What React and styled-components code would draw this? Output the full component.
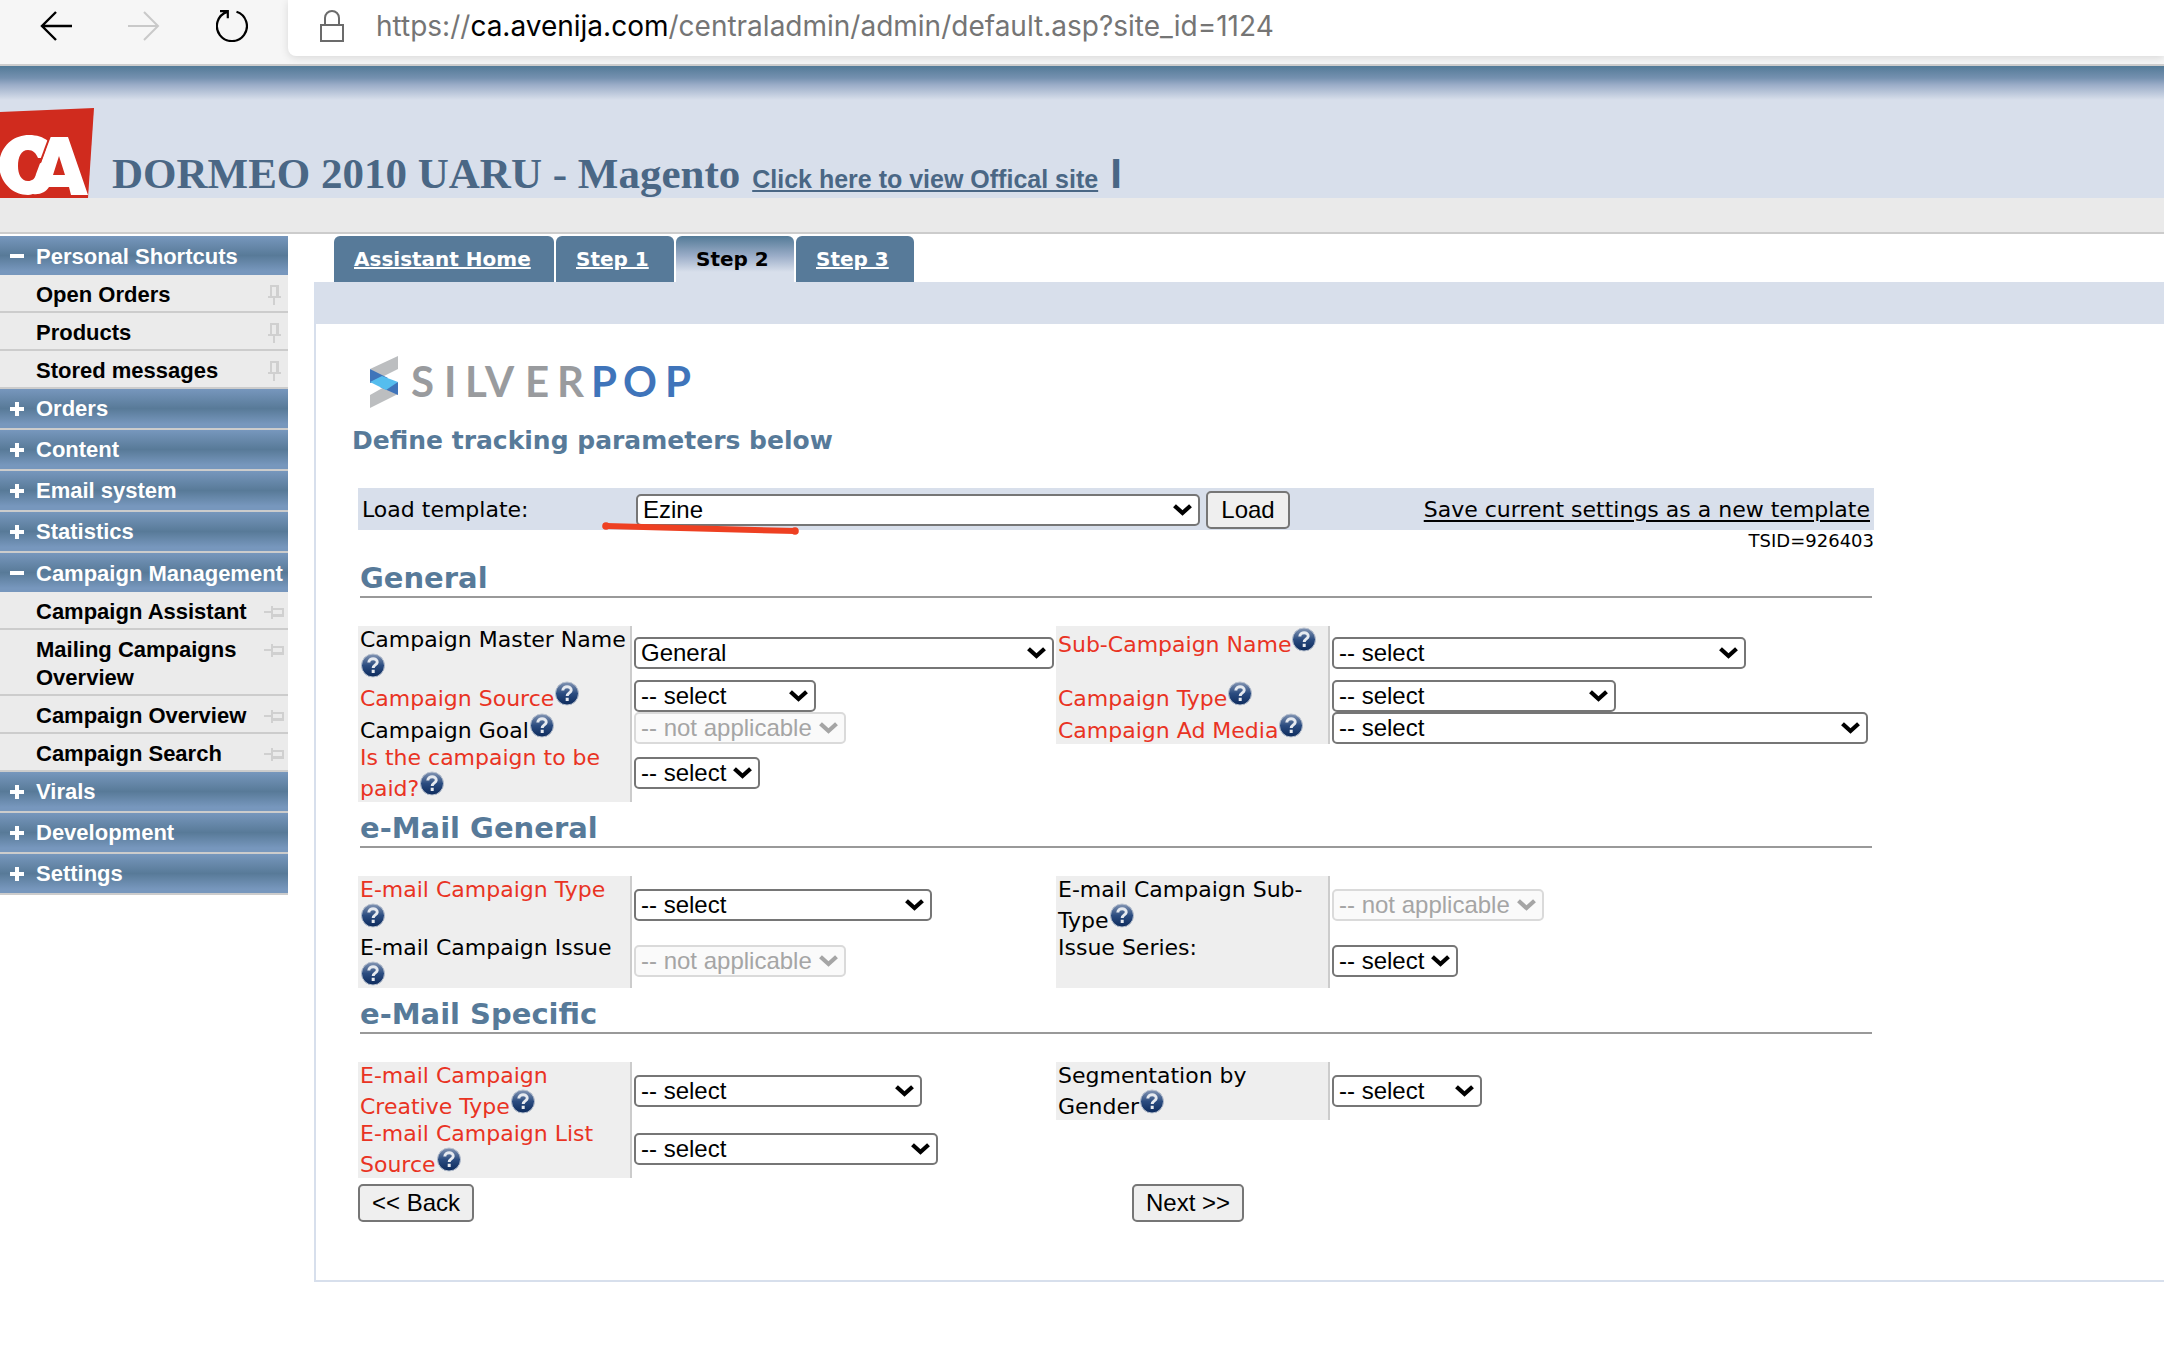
import React, { useId } from "react";
import styled, { createGlobalStyle } from "styled-components";

const verdana = `Verdana, "DejaVu Sans", sans-serif`;
const arial = `"Liberation Sans", Arial, sans-serif`;
const steel = "#577a99";
const pale = "#d8dfeb";

const GlobalStyle = createGlobalStyle`
  *, *::before, *::after { box-sizing: border-box; }
  body { margin: 0; background: #fff; color: #000; font: 22px/26px ${verdana}; }
  a { color: inherit; }
`;

/* ---------- browser bar ---------- */

const BrowserBar = styled.div`
  display: flex;
  height: 66px;
  background: #f6f6f6;
  border-bottom: 2px solid #cdcdcd;
`;

const NavButtons = styled.div`
  display: flex;
  align-items: flex-start;
  gap: 56px;
  width: 288px;
  padding: 10px 0 0 40px;
`;

const NavButton = styled.button`
  display: block;
  width: 32px;
  height: 32px;
  padding: 0;
  border: 0;
  background: none;
  svg { display: block; }
`;

const AddressBar = styled.div`
  display: flex;
  flex: 1;
  align-items: center;
  gap: 32px;
  height: 56px;
  padding: 0 0 4px 32px;
  background: #fff;
  border-bottom-left-radius: 8px;
  box-shadow: 0 2px 8px rgba(0, 0, 0, 0.12);
  clip-path: inset(0 0 -8px -8px);
`;

const Url = styled.span`
  color: #757575;
  font: 28px/34px Inter, sans-serif;
  b { color: #000; font-weight: 400; }
`;

/* ---------- page header ---------- */

const Header = styled.header`
  display: flex;
  align-items: flex-end;
  gap: 18px;
  height: 132px;
  color: #4a6785;
  background: linear-gradient(#537a97, #7591b0 12px, #9badc8 19px, ${pale} 34px);
`;

const LogoBox = styled.svg`
  display: block;
  flex: none;
`;

const SiteTitle = styled.h1`
  display: flex;
  align-items: baseline;
  margin: 0;
  gap: 12px;
  font: bold 43px/48px "Liberation Serif", "Times New Roman", serif;
`;

const SiteLink = styled.a`
  font: bold 25px/30px ${arial};
`;

const TitleEnd = styled.span`
  font: bold 42px/48px ${arial};
`;

const SubHeader = styled.div`
  height: 36px;
  background: #eaeaea;
  border-bottom: 2px solid #ccc;
`;

/* ---------- sidebar ---------- */

const Body = styled.div`
  display: flex;
  align-items: flex-start;
  padding-top: 2px;
`;

const Sidebar = styled.nav`
  flex: none;
  width: 288px;
  font: bold 22px/28px ${arial};
`;

const GroupButton = styled.button`
  display: flex;
  align-items: center;
  gap: 12px;
  width: 100%;
  height: ${(p) => (p.$open ? 39 : 41)}px;
  padding: ${(p) => (p.$open ? 2 : 0)}px 0 0 10px;
  border: 0;
  border-bottom: ${(p) => (p.$open ? "0" : "2px solid #ccc")};
  background: linear-gradient(#7797bd, #587a98 50%, #7797bd 90%);
  color: #fff;
  font: inherit;
  text-align: left;
  white-space: nowrap;
`;

const ItemList = styled.ul`
  margin: 0;
  padding: 0;
  list-style: none;
`;

const Item = styled.li`
  display: flex;
  align-items: flex-start;
  justify-content: space-between;
  padding: 6px ${(p) => (p.$flat ? 4 : 7)}px 2px 36px;
  border-bottom: 2px solid #ccc;
  background: #ebebeb;
  svg { flex: none; margin-top: ${(p) => (p.$flat ? 8 : 4)}px; }
`;

const ItemLink = styled.a`
  color: #000;
  text-decoration: none;
`;

/* ---------- main panel ---------- */

const Main = styled.main`
  flex: 1;
  min-width: 0;
  padding-left: 26px;
`;

const Tabs = styled.nav`
  display: flex;
  gap: 2px;
  padding-left: 20px;
`;

const Tab = styled.a`
  min-width: ${(p) => (p.$wide ? 220 : 118)}px;
  height: 46px;
  padding: 10px 20px 0;
  border-radius: 6px 6px 0 0;
  background: ${(p) =>
    p.$active ? `linear-gradient(#537a97, #9badc8 20px, ${pale} 36px)` : steel};
  color: ${(p) => (p.$active ? "#000" : "#fff")};
  font-size: 20px;
  font-weight: bold;
  text-decoration: ${(p) => (p.$active ? "none" : "underline")};
  text-decoration-thickness: 2px;
  white-space: nowrap;
`;

const Panel = styled.section`
  border: solid #d7dfec;
  border-width: 0 0 2px 2px;
`;

const PanelBand = styled.div`
  height: 42px;
  background: ${pale};
`;

const PanelBody = styled.div`
  padding: 32px 40px 58px 36px;
`;

const Intro = styled.h2`
  margin: 0 0 30px;
  padding-top: 14px;
  color: ${steel};
  font-size: 25px;
  line-height: 34px;
`;

const Form = styled.form`
  max-width: 1522px;
  padding-left: 6px;
`;

const TemplateRow = styled.div`
  position: relative;
  display: flex;
  align-items: center;
  height: 42px;
  padding: 2px 4px 0;
  background: ${pale};
`;

const TemplateLabel = styled.label`
  width: 274px;
`;

const TemplateLink = styled.a`
  margin-left: auto;
  color: #000;
  text-decoration-thickness: 2px;
  text-underline-offset: 3px;
`;

const MarkerStroke = styled.svg`
  position: absolute;
  left: 244px;
  top: 33px;
`;

const SettingId = styled.div`
  font-size: 18px;
  line-height: 22px;
  text-align: right;
`;

const SectionTitle = styled.h3`
  margin: 0 2px 28px;
  padding: 9px 0 1px;
  border-bottom: 2px solid #999;
  color: ${steel};
  font-size: 29px;
  line-height: 34px;
`;

const Fields = styled.div`
  display: grid;
  grid-template-columns: 274px 424px 274px 1fr;
`;

const LabelCell = styled.div`
  grid-column: ${(p) => (p.$right ? 3 : 1)};
  padding: 1px 0 0 2px;
  border-right: 2px solid #ccc;
  background: #eee;
  color: ${(p) => (p.$required ? "#e93323" : "#000")};
`;

const ValueCell = styled.div`
  display: flex;
  align-items: center;
  padding-left: 2px;
`;

const HelpIcon = styled.svg`
  display: ${(p) => (p.$ownLine ? "block" : "inline")};
  width: 26px;
  height: ${(p) => (p.$ownLine ? 27 : 25)}px;
  vertical-align: baseline;
`;

const SelectBox = styled.span`
  position: relative;
  display: block;
  flex: none;
  width: ${(p) => p.$width}px;
  height: 32px;
  color: ${(p) => (p.$disabled ? "#a5a5a5" : "#000")};
  svg { position: absolute; right: 8px; top: 10px; pointer-events: none; }
`;

const NativeSelect = styled.select`
  display: block;
  width: 100%;
  height: 100%;
  padding: 0 28px 0 5px;
  appearance: none;
  border: 2px solid #767676;
  border-radius: 5px;
  background: #fff;
  color: #000;
  font: 24px/28px ${arial};
  opacity: 1;
  &:disabled { border-color: #dadada; background: #fafafa; color: #a5a5a5; }
`;

const Button = styled.button`
  min-width: 84px;
  height: 38px;
  padding: 0 12px;
  border: 2px solid #767676;
  border-radius: 5px;
  background: #efefef;
  color: #000;
  font: 24px/28px ${arial};
  white-space: nowrap;
`;

const LoadButton = styled(Button)`
  margin-left: 6px;
`;

const Actions = styled.div`
  display: grid;
  grid-template-columns: 774px 1fr;
  justify-items: start;
  padding-top: 6px;
`;

/* ---------- drawings ---------- */

const BackArrow = () => (
  <svg width="32" height="30" viewBox="0 0 32 30" fill="none" stroke="#000" strokeWidth="2.4">
    <path d="M32 15H2M16 1 2 15l14 14" />
  </svg>
);

const ForwardArrow = () => (
  <svg width="32" height="30" viewBox="0 0 32 30" fill="none" stroke="#c9c9c9" strokeWidth="2">
    <path d="M0 15h30M16 1l14 14-14 14" />
  </svg>
);

const ReloadIcon = () => (
  <svg width="32" height="32" viewBox="0 0 32 32" fill="none" stroke="#000" strokeWidth="2.2">
    <path d="M20.500 1.800A15 15 0 1 1 11 1.900M4 1.200h7.800v7" />
  </svg>
);

const LockIcon = () => (
  <svg width="24" height="32" viewBox="0 0 24 32" fill="none" stroke="#6b6b6b" strokeWidth="2">
    <path d="M1 15h22v16H1zM5 15V8a7 7 0 0 1 14 0v7" />
  </svg>
);

const CaLogo = () => (
  <LogoBox width="94" height="90" viewBox="0 0 94 90" aria-label="CA">
    <path fill="#d02b1e" d="M0 4 94 0 88 90H0z" />
    <path fill="#fff" d="M29 27C37 27 43 29 48 33L41 52 42 78C38 83 34 87 28 87C12 87 0 74-1 58C-1 40 12 27 29 27z" />
    <path fill="#d02b1e" d="M28 42C33 42 36 45 38 50L42 50 36 66C35 71 32 73 28 73C21 73 18 66 18 58C18 49 21 42 28 42z" />
    <path
      fill="#fff"
      fillRule="evenodd"
      d="M50 29H68L88 87H71L69 79H49C46 84 40 87 33 86L30 74C34 73 36 69 38 63zM59 48 53 67H65z"
    />
    <path fill="none" stroke="#d02b1e" strokeWidth="2" d="M50 28 40 55" />
  </LogoBox>
);

const Sign = ({ minus }) => (
  <svg width="14" height="14" viewBox="0 0 14 14" stroke="#fff" strokeWidth="4">
    <path d={minus ? "M0 6h14" : "M0 7h14M7 0v14"} />
  </svg>
);

const Pin = ({ flat }) =>
  flat ? (
    <svg width="20" height="13" viewBox="0 0 20 13" fill="none" stroke="#d0d0d0" strokeWidth="2">
      <path d="M0 6h8M8 0v13M8 3h11v6H8M8 10h12" />
    </svg>
  ) : (
    <svg width="13" height="20" viewBox="0 0 13 20" fill="none" stroke="#d0d0d0" strokeWidth="2">
      <path d="M6 20v-8M0 12h13M3 12V1h6v11M10 0v12" />
    </svg>
  );

const Chevron = () => (
  <svg width="19" height="12" viewBox="0 0 19 12" fill="none" stroke="currentColor" strokeWidth="4.200">
    <path d="M1.500 1.700 9.500 9l8-7.300" />
  </svg>
);

const Silverpop = () => (
  <LogoBox width="346" height="54" viewBox="-2 0 346 54" aria-label="Silverpop">
    <path fill="#bcbec0" d="M16 13 44 0v13L28 21zM44 38 16 52V39l16-9z" />
    <path fill="#3f74ba" d="M16 13v14l18-5zM44 39V26l-18 5z" />
    <path fill="#55bdee" d="m16 26 12-6 16 6-12 8z" />
    <g fontFamily="Lato, sans-serif" fontSize="42" fontWeight="700">
      <text y="41" x="57 90 111 131 171 203" fill="#999b9e">SILVER</text>
      <text y="41" x="237 269 311" fill="#3f74ba">POP</text>
    </g>
  </LogoBox>
);

const Help = ({ ownLine }) => {
  const id = useId();
  return (
    <HelpIcon viewBox={ownLine ? "0 0 26 27" : "0 0 26 25"} $ownLine={ownLine} aria-label="Help">
      <defs>
        <linearGradient id={id} x1="0" y1="0" x2="0" y2="1">
          <stop offset="0" stopColor="#8496b4" />
          <stop offset="0.5" stopColor="#2b4c80" />
          <stop offset="1" stopColor="#0c2a5c" />
        </linearGradient>
      </defs>
      <circle cx="13" cy="12.500" r="11.500" fill={`url(#${id})`} stroke="#b9c2d0" />
      <path
        d="M8.800 9.500c.2-5 8.600-4.800 8.400-.3-.1 2.700-4 2.700-4 5.800M13.200 16.800v3.200"
        fill="none"
        stroke="#e6eaf0"
        strokeWidth="3"
      />
    </HelpIcon>
  );
};

/* ---------- parts ---------- */

const menu = [
  { name: "Personal Shortcuts", items: ["Open Orders", "Products", "Stored messages"] },
  { name: "Orders" },
  { name: "Content" },
  { name: "Email system" },
  { name: "Statistics" },
  {
    name: "Campaign Management",
    flat: true,
    items: ["Campaign Assistant", "Mailing Campaigns Overview", "Campaign Overview", "Campaign Search"],
  },
  { name: "Virals" },
  { name: "Development" },
  { name: "Settings" },
];

const NA = "-- not applicable";
const SEL = "-- select";

const sections = [
  {
    title: "General",
    fields: [
      { label: "Campaign Master Name", ownLine: true, value: "General", width: 420 },
      { label: "Sub-Campaign Name", required: true, value: SEL, width: 414, right: true },
      { label: "Campaign Source", required: true, value: SEL, width: 182 },
      { label: "Campaign Type", required: true, value: SEL, width: 284, right: true },
      { label: "Campaign Goal", value: NA, width: 212 },
      { label: "Campaign Ad Media", required: true, value: SEL, width: 536, right: true },
      { label: "Is the campaign to be paid?", required: true, value: SEL, width: 126 },
    ],
  },
  {
    title: "e-Mail General",
    fields: [
      { label: "E-mail Campaign Type", ownLine: true, required: true, value: SEL, width: 298 },
      { label: "E-mail Campaign Sub-Type", value: NA, width: 212, right: true },
      { label: "E-mail Campaign Issue", ownLine: true, value: NA, width: 212 },
      { label: "Issue Series:", noHelp: true, value: SEL, width: 126, right: true },
    ],
  },
  {
    title: "e-Mail Specific",
    fields: [
      { label: "E-mail Campaign Creative Type", required: true, value: SEL, width: 288 },
      { label: "Segmentation by Gender", value: SEL, width: 150, right: true },
      { label: "E-mail Campaign List Source", required: true, value: SEL, width: 304 },
    ],
  },
];

const Select = ({ id, value, width }) => {
  const disabled = value === NA;
  return (
    <SelectBox $width={width} $disabled={disabled}>
      <NativeSelect id={id} disabled={disabled}>
        <option>{value}</option>
      </NativeSelect>
      <Chevron />
    </SelectBox>
  );
};

const Field = ({ label, required, right, ownLine, noHelp, value, width }) => {
  const id = useId();
  return (
    <>
      <LabelCell $required={required} $right={right}>
        <label htmlFor={id}>{label}</label>
        {!noHelp && <Help ownLine={ownLine} />}
      </LabelCell>
      <ValueCell>
        <Select id={id} value={value} width={width} />
      </ValueCell>
    </>
  );
};

export default function App() {
  return (
    <>
      <GlobalStyle />
      <BrowserBar>
        <NavButtons>
          <NavButton aria-label="Back"><BackArrow /></NavButton>
          <NavButton aria-label="Forward"><ForwardArrow /></NavButton>
          <NavButton aria-label="Reload"><ReloadIcon /></NavButton>
        </NavButtons>
        <AddressBar>
          <LockIcon />
          <Url>https://<b>ca.avenija.com</b>/centraladmin/admin/default.asp?site_id=1124</Url>
        </AddressBar>
      </BrowserBar>
      <Header>
        <CaLogo />
        <SiteTitle>
          DORMEO 2010 UARU - Magento
          <SiteLink href="#site">Click here to view Offical site</SiteLink>
          <TitleEnd>I</TitleEnd>
        </SiteTitle>
      </Header>
      <SubHeader />
      <Body>
        <Sidebar>
          {menu.map(({ name, items, flat }) => (
            <React.Fragment key={name}>
              <GroupButton $open={!!items}>
                <Sign minus={!!items} />
                {name}
              </GroupButton>
              {items && (
                <ItemList>
                  {items.map((item) => (
                    <Item key={item} $flat={flat}>
                      <ItemLink href="#item">{item}</ItemLink>
                      <Pin flat={flat} />
                    </Item>
                  ))}
                </ItemList>
              )}
            </React.Fragment>
          ))}
        </Sidebar>
        <Main>
          <Tabs>
            <Tab href="#home" $wide>Assistant Home</Tab>
            <Tab href="#step1">Step 1</Tab>
            <Tab href="#step2" $active>Step 2</Tab>
            <Tab href="#step3">Step 3</Tab>
          </Tabs>
          <Panel>
            <PanelBand />
            <PanelBody>
              <Silverpop />
              <Intro>Define tracking parameters below</Intro>
              <Form onSubmit={(e) => e.preventDefault()}>
                <TemplateRow>
                  <TemplateLabel htmlFor="template">Load template:</TemplateLabel>
                  <Select id="template" value="Ezine" width={564} />
                  <LoadButton>Load</LoadButton>
                  <TemplateLink href="#save">Save current settings as a new template</TemplateLink>
                  <MarkerStroke width="197" height="14" viewBox="0 0 197 14" fill="#ee4022">
                    <path stroke="#ee4022" strokeWidth="6" d="M4 5 193 10" />
                    <circle cx="4" cy="5" r="3.800" />
                    <circle cx="193" cy="10" r="3.800" />
                  </MarkerStroke>
                </TemplateRow>
                <SettingId>TSID=926403</SettingId>
                {sections.map(({ title, fields }) => (
                  <React.Fragment key={title}>
                    <SectionTitle>{title}</SectionTitle>
                    <Fields>
                      {fields.map((f) => (
                        <Field key={f.label} {...f} />
                      ))}
                    </Fields>
                  </React.Fragment>
                ))}
                <Actions>
                  <Button>&lt;&lt; Back</Button>
                  <Button>Next &gt;&gt;</Button>
                </Actions>
              </Form>
            </PanelBody>
          </Panel>
        </Main>
      </Body>
    </>
  );
}
